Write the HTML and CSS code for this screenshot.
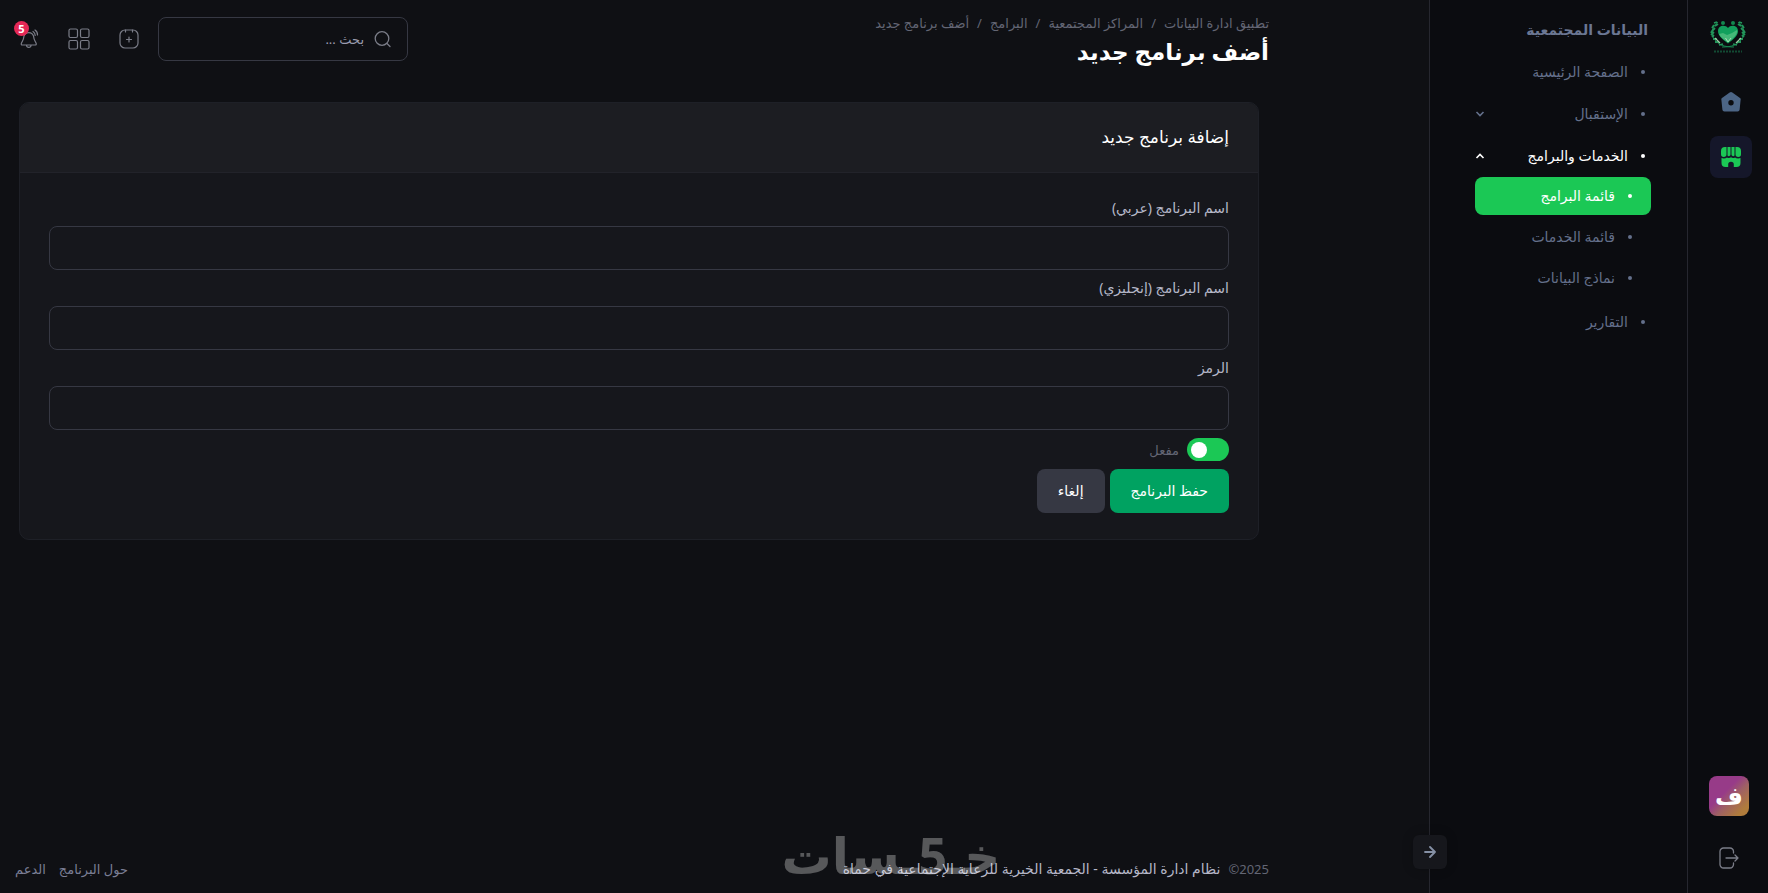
FILE: index.html
```html
<!DOCTYPE html>
<html lang="ar" dir="rtl">
<head>
<meta charset="utf-8">
<meta name="viewport" content="width=device-width, initial-scale=1">
<title>أضف برنامج جديد</title>
<link rel="stylesheet" href="styles.css">
</head>
<body>
<div class="app">
  <aside class="rail">
    <a class="rail-logo" href="#" aria-label="الشعار">
      <svg width="36" height="34" viewBox="0 0 36 34" fill="none">
        <path d="M18 23.500C12 19 8 15.500 8 11C8 5.500 15 4 18 8C21 4 28 5.500 28 11C28 15.500 24 19 18 23.500Z" fill="#12a05c"/>
        <path d="M9 14l4-1 4 2 5-2 5-3c1 4-3 8-9 12.500C13 19 10 17 9 14z" fill="#45b878"/>
        <path d="M15.500 18l2.500 4 3-4" stroke="#a9dbb4" stroke-width="1"/>
        <circle cx="13" cy="3" r="2" fill="#12894f"/><circle cx="23" cy="3" r="2" fill="#12894f"/>
        <path d="M8 2C2 6 0 14 5 20C9 25 14 27 24 27M28 2C34 6 36 14 31 20C27 25 22 27 12 27" stroke="#178a52" stroke-width="1"/>
        <path d="M7 2L4 3M8 4L5 6M4 5L2 8M5 8L2 11M2 11L1 13M4 12l-3 3M4 15l-2 2M7 19l-4 0M9 22l-4 0M13 24l-4 1M29 2l3 1M28 4l3 2M32 5l2 3M31 8l3 3M34 11l1 2M32 12l3 3M32 15l2 2M29 19l4 0M27 22l4 0M23 24l4 1" stroke="#22955a" stroke-width="1.800"/>
        <path d="M5 18l5 5M31 18l-5 5" stroke="#9cc9a2" stroke-width="1.200"/>
        <path d="M4 31.500h28" stroke="#124a33" stroke-width="2" stroke-dasharray="2 1"/>
      </svg>
    </a>
    <nav class="rail-nav" aria-label="التطبيقات">
      <a class="rail-link" href="#" aria-label="الرئيسية">
        <svg width="20" height="20" viewBox="0 0 20 20"><path fill="#4c6585" fill-rule="evenodd" d="M8.700.6a2 2 0 0 1 2.600 0l7.700 5.400a1.800 1.800 0 0 1 .6 1.900l-1 9.800a2 2 0 0 1-2 1.800H3.400a2 2 0 0 1-2-1.800l-1-9.800A1.800 1.800 0 0 1 1 6zM10 8a2.700 2.700 0 1 0 0 5.400A2.700 2.700 0 0 0 10 8z"/></svg>
      </a>
      <a class="rail-link rail-link-active" href="#" aria-label="المراكز المجتمعية">
        <svg width="20" height="20" viewBox="0 0 20 20" fill="#1bc855"><path d="M4 0h1.500v7.200a2.750 2.750 0 0 1-5.500 0V4a4 4 0 0 1 4-4zM6.500 0h3v7.500a1.700 1.700 0 0 1-3 1zM10.500 0h3v8.500a1.700 1.700 0 0 1-3-1zM14.500 0H16a4 4 0 0 1 4 4v3.200a2.750 2.750 0 0 1-5.500 0z"/><path d="M.5 11c2 .8 4.200.5 5.500-.6 1.300.8 2.900.8 4-.2 1.100 1 2.700 1 4 .2 1.300 1.100 3.500 1.400 5.500.6v5a4 4 0 0 1-4 4h-2.700v-2.500a2.800 2.800 0 0 0-5.600 0V20H4.500a4 4 0 0 1-4-4z"/></svg>
      </a>
    </nav>
    <div class="rail-foot">
      <button class="avatar" type="button">ف</button>
      <button class="icon-button" type="button" aria-label="تسجيل الخروج">
        <svg width="20" height="22" viewBox="0 0 20 22" fill="none" stroke="#7b7d88" stroke-width="1.300" stroke-linecap="round" stroke-linejoin="round"><path d="M14.500 6V4.500A3.500 3.500 0 0 0 11 1H4.500A3.500 3.500 0 0 0 1 4.500v13A3.500 3.500 0 0 0 4.500 21H11a3.500 3.500 0 0 0 3.500-3.500V16M7 11h12M16 8l3 3-3 3"/></svg>
      </button>
    </div>
  </aside>

  <aside class="menu">
    <h2 class="menu-title">البيانات المجتمعية</h2>
    <nav class="menu-list" aria-label="القائمة">
      <a class="menu-item" href="#"><span class="dot"></span>الصفحة الرئيسية</a>
      <a class="menu-item" href="#"><span class="dot"></span>الإستقبال
        <svg class="chevron" width="10" height="6" viewBox="0 0 10 6"><path d="M1.500 1L5 4.500 8.500 1"/></svg></a>
      <a class="menu-item menu-item-open" href="#"><span class="dot"></span>الخدمات والبرامج
        <svg class="chevron" width="10" height="6" viewBox="0 0 10 6"><path d="M1.500 5L5 1.500 8.500 5"/></svg></a>
      <div class="submenu">
        <a class="menu-item menu-item-active" href="#"><span class="dot"></span>قائمة البرامج</a>
        <a class="menu-item" href="#"><span class="dot"></span>قائمة الخدمات</a>
        <a class="menu-item" href="#"><span class="dot"></span>نماذج البيانات</a>
      </div>
      <a class="menu-item" href="#"><span class="dot"></span>التقارير</a>
    </nav>
    <button class="menu-toggle" type="button" aria-label="طي القائمة">
      <svg width="12" height="12" viewBox="0 0 12 12" fill="none" stroke="#8590a5" stroke-width="1.800" stroke-linecap="round" stroke-linejoin="round"><path d="M1 6h10M6 1l5 5-5 5"/></svg>
    </button>
  </aside>

  <div class="page">
    <header class="topbar">
      <div class="heading">
        <nav class="breadcrumb" aria-label="مسار التنقل">
          <a href="#">تطبيق ادارة البيانات</a><span>/</span><a href="#">المراكز المجتمعية</a><span>/</span><a href="#">البرامج</a><span>/</span><span>أضف برنامج جديد</span>
        </nav>
        <h1 class="title">أضف برنامج جديد</h1>
      </div>
      <div class="tools">
        <label class="search">
          <svg width="17" height="17" viewBox="0 0 17 17" fill="none" stroke="#7b7d88" stroke-width="1.300" stroke-linecap="round"><circle cx="8" cy="7.500" r="6.800"/><path d="M13 12.500l3 3"/></svg>
          <input type="search" placeholder="بحث ..." aria-label="بحث">
        </label>
        <button class="icon-button" type="button" aria-label="إضافة">
          <svg width="20" height="20" viewBox="0 0 20 20" fill="none" stroke="#7b7d88" stroke-width="1.200" stroke-linecap="round"><rect x="1" y="1" width="18" height="18" rx="5"/><path d="M6.500 1v2M13.500 1v2M10 8v5M7.500 10.500h5"/></svg>
        </button>
        <button class="icon-button" type="button" aria-label="التطبيقات">
          <svg width="22" height="22" viewBox="0 0 22 22" fill="none" stroke="#7b7d88" stroke-width="1.200"><rect x="1" y="1" width="8.500" height="8.500" rx="1.500"/><rect x="12.500" y="1" width="8.500" height="8.500" rx="1.500"/><rect x="1" y="12.500" width="8.500" height="8.500" rx="1.500"/><rect x="12.500" y="12.500" width="8.500" height="8.500" rx="1.500"/></svg>
        </button>
        <button class="icon-button" type="button" aria-label="الإشعارات">
          <svg width="20" height="20" viewBox="0 0 20 20" fill="none" stroke="#7b7d88" stroke-width="1.200" stroke-linecap="round" stroke-linejoin="round"><path d="M5 7a5 5 0 0 1 9.500 0c.3 3.500 1.300 4.500 2.500 7 .6 1.300.2 2-.8 2H3.300c-1 0-1.400-.7-.8-2C3.700 11.500 4.700 10.500 5 7zM7.500 16.200c.3 3 4.300 3 4.600 0M14 2.500c1.500 1 2.200 2.300 2.200 4M16 1c1.800 1.200 2.600 3 2.500 5"/></svg>
          <span class="badge">5</span>
        </button>
      </div>
    </header>

    <main class="content">
      <section class="card">
        <div class="card-head"><h2 class="card-title">إضافة برنامج جديد</h2></div>
        <form class="card-body">
          <label class="label" for="name-ar">اسم البرنامج (عربي)</label>
          <input class="field" id="name-ar" type="text">
          <label class="label" for="name-en">اسم البرنامج (إنجليزي)</label>
          <input class="field" id="name-en" type="text">
          <label class="label" for="code">الرمز</label>
          <input class="field" id="code" type="text">
          <label class="switch-row"><input class="switch" type="checkbox" checked>مفعل</label>
          <div class="actions">
            <button class="button button-save" type="submit">حفظ البرنامج</button>
            <button class="button button-cancel" type="button">إلغاء</button>
          </div>
        </form>
      </section>
    </main>

    <footer class="footer">
      <div class="copyright"><span>2025©</span><a href="#">نظام ادارة المؤسسة - الجمعية الخيرية للرعاية الإجتماعية في حماة</a></div>
      <div class="footer-links"><a href="#">حول البرنامج</a><a href="#">الدعم</a></div>
      <div class="watermark">خـ5ـسات</div>
    </footer>
  </div>
</div>
</body>
</html>
```
FILE: styles.css
```css
* { box-sizing: border-box; }
body {
  margin: 0;
  background: #0f1014;
  color: #b5b7c8;
  font-family: "Noto Sans", "DejaVu Sans", sans-serif;
  font-size: 13px;
  line-height: 20px;
}
a { color: inherit; text-decoration: none; }
button, input { font: inherit; color: inherit; }
h1, h2 { margin: 0; }
svg { display: block; flex: none; }
.app { display: flex; min-height: 100vh; }

.rail {
  flex: none;
  width: 80px;
  display: flex;
  flex-direction: column;
  align-items: center;
  background: #0b0c10;
  padding: 20px 0;
}
.rail-nav { display: flex; flex-direction: column; gap: 13px; margin-top: 27px; padding-left: 6px; }
.rail-link { display: grid; place-items: center; width: 42px; height: 42px; border-radius: 8px; }
.rail-link-active { background: #15172a; }
.rail-foot { display: flex; flex-direction: column; align-items: center; gap: 27px; margin-top: auto; padding-left: 2px; }
.avatar {
  width: 40px;
  height: 40px;
  padding: 0;
  border: 0;
  border-radius: 8px;
  background: linear-gradient(135deg, #973b88 0 40%, #9f6064 58%, #b07c3c 85%);
  color: #fff;
  font-size: 24px;
  font-weight: 700;
}
.icon-button {
  position: relative;
  display: grid;
  place-items: center;
  width: 30px;
  height: 30px;
  padding: 0;
  border: 0;
  background: none;
}

.menu {
  position: relative;
  flex: none;
  width: 259px;
  padding: 20px 36px 20px 45px;
  background: #0b0c10;
  border: solid #26272f;
  border-width: 0 1px;
}
.menu-title { padding-inline: 3px; font-size: 14px; font-weight: 700; color: #6b7793; }
.menu-list { display: flex; flex-direction: column; gap: 4px; margin-top: 13px; font-size: 14px; }
.menu-item {
  display: flex;
  align-items: center;
  gap: 13px;
  height: 38px;
  padding-inline-start: 6px;
  border-radius: 8px;
  color: #64708b;
}
.dot { flex: none; width: 4px; height: 4px; border-radius: 50%; background: currentColor; }
.chevron { margin-inline-start: auto; fill: none; stroke: currentColor; stroke-width: 1.600; }
.menu-item-open { color: #fff; font-weight: 500; }
.submenu { display: flex; flex-direction: column; gap: 3px; margin: -2px 0 2px; }
.submenu .menu-item { padding-inline-start: 19px; }
.submenu .menu-item-active { background: #1bc855; color: #fff; font-weight: 500; }
.menu-toggle {
  position: absolute;
  left: -17px;
  bottom: 24px;
  display: grid;
  place-items: center;
  width: 34px;
  height: 34px;
  padding: 0;
  border: 0;
  border-radius: 6px;
  background: #16171c;
  box-shadow: 0 0 12px rgba(0, 0, 0, .2);
}

.page { flex: 1; min-width: 0; display: flex; flex-direction: column; }
.topbar { display: flex; justify-content: space-between; padding: 13px 160px 0 14px; height: 82px; }
.heading { display: flex; flex-direction: column; }
.breadcrumb { display: flex; gap: 8px; color: #636674; }
.title { color: #fff; font-size: 23px; line-height: 36px; font-weight: 700; }
.tools { display: flex; align-items: center; gap: 20px; height: 52px; }
.search {
  display: flex;
  align-items: center;
  gap: 10px;
  width: 250px;
  height: 44px;
  padding: 0 16px;
  margin-left: -6px;
  border: 1px solid #363843;
  border-radius: 8px;
}
.search input { flex: 1; min-width: 0; padding: 0; border: 0; outline: 0; background: none; }
.search input::placeholder { color: #9a9cae; opacity: 1; }
.badge {
  position: absolute;
  top: -3px;
  left: 0;
  width: 15px;
  height: 15px;
  border-radius: 50%;
  background: #e42855;
  color: #fff;
  font-size: 11px;
  font-weight: 700;
  line-height: 15px;
  text-align: center;
}

.content { flex: 1; padding: 20px 170px 20px 19px; }
.card { border: 1px solid #1e2027; border-radius: 10px; background: #16171c; overflow: hidden; }
.card-head { display: flex; align-items: center; height: 70px; padding: 0 29px 2px; background: #1c1d22; border-bottom: 1px solid #22232a; }
.card-title { color: #fff; font-size: 17px; font-weight: 500; }
.card-body { display: flex; flex-direction: column; padding: 25px 29px 26px; }
.label { margin-bottom: 8px; font-size: 14px; }
.field {
  width: 100%;
  height: 44px;
  margin-bottom: 8px;
  padding: 0 16px;
  border: 1px solid #363843;
  border-radius: 8px;
  background: transparent;
}
.switch-row { display: flex; align-items: center; align-self: flex-start; gap: 8px; height: 23px; color: #636674; }
.switch {
  appearance: none;
  display: flex;
  align-items: center;
  width: 42px;
  height: 23px;
  margin: 0;
  padding: 0 4px;
  border-radius: 12px;
  background: #1bc855;
}
.switch::before { content: ""; width: 16px; height: 16px; border-radius: 50%; background: #fff; }
.switch:checked::before { margin-inline-start: auto; }
.actions { display: flex; gap: 5px; margin-top: 8px; }
.button { height: 44px; padding: 0 21px; border: 0; border-radius: 8px; color: #fff; font-size: 14px; font-weight: 500; }
.button-save { background: #00a261; }
.button-cancel { background: #363843; }

.footer { position: relative; display: flex; justify-content: space-between; padding: 0 160px 14px 15px; }
.copyright { display: flex; gap: 8px; }
.copyright span { color: #636674; }
.copyright a { font-size: 14px; }
.footer-links { display: flex; gap: 13px; color: #7b7f96; }
.watermark {
  position: absolute;
  right: 30%;
  bottom: 8px;
  color: rgba(255, 255, 255, .3);
  font-size: 50px;
  font-weight: 700;
  line-height: 60px;
  pointer-events: none;
}
```
